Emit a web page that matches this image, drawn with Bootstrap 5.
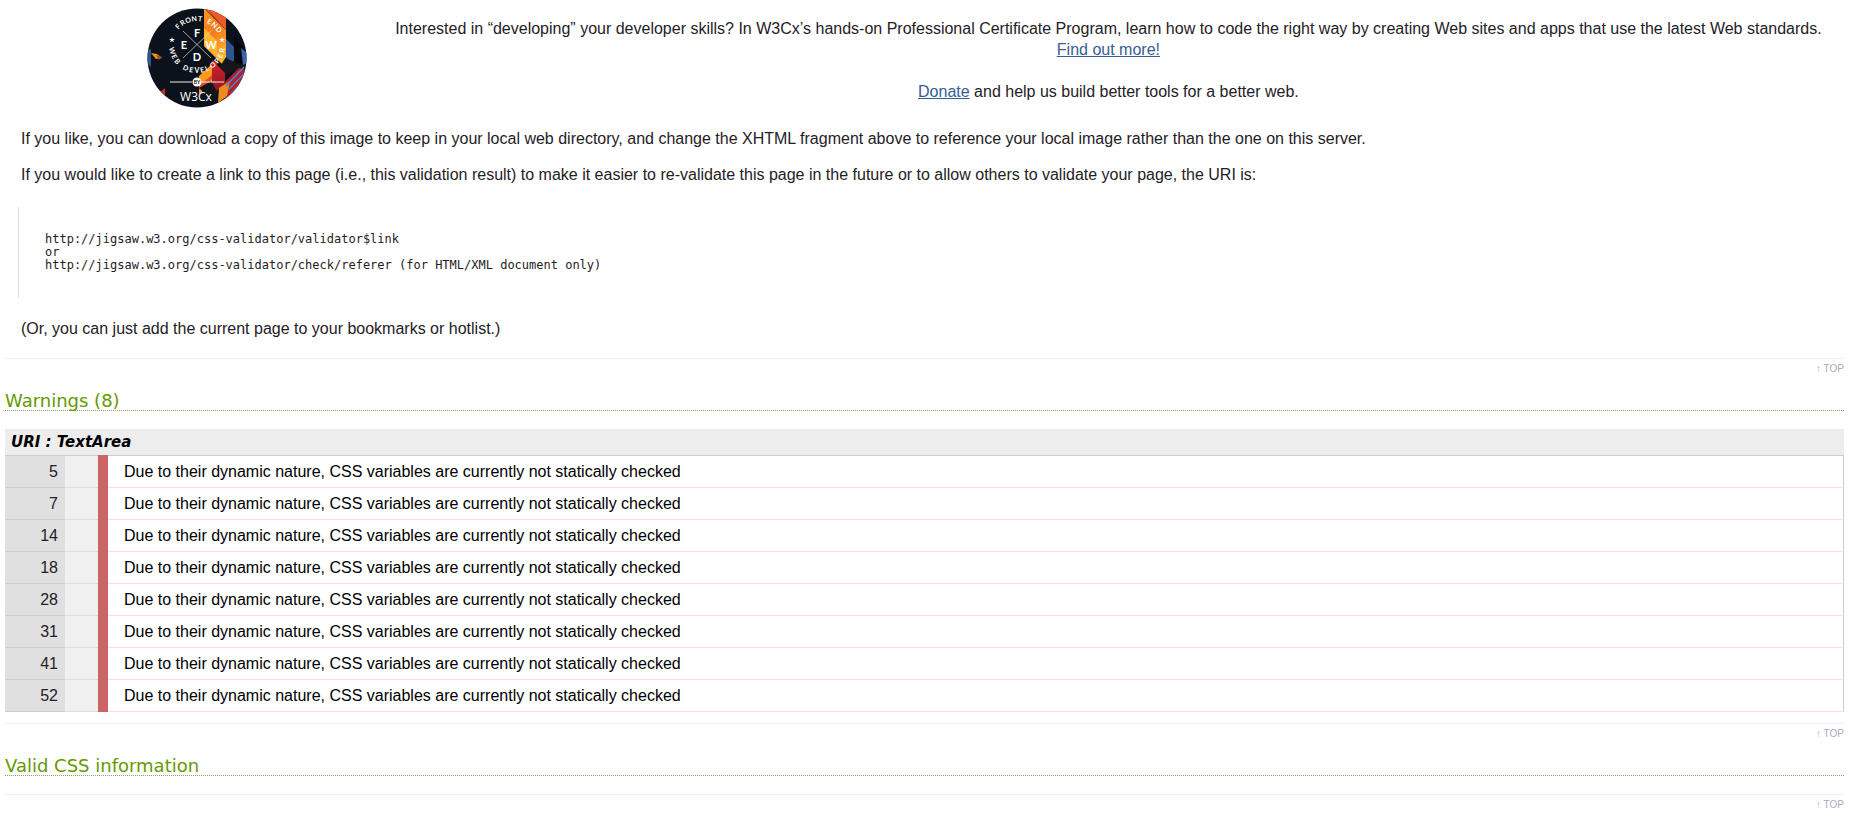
<!DOCTYPE html>
<html lang="en">
<head>
<meta charset="utf-8">
<meta name="viewport" content="width=device-width, initial-scale=1">
<title>W3C CSS Validator results for TextArea</title>
<link href="https://cdn.jsdelivr.net/npm/bootstrap@5.3.0/dist/css/bootstrap.min.css" rel="stylesheet">
<style>
body { font: 16px/21px "Liberation Sans", Arial, sans-serif; color: #1f2126; background: #fff; padding: 0 32px 0 5px; }
a { color: #365d95; }
.promo { padding: 8px 0 20px; }
.promo-logo { width: 20%; padding-left: 16px; }
.promo-copy { padding: 10px 16px 0; }
.note { margin: 0 16px 15px; }
.snippet { margin: 22px 13px 20px; padding: 26px; border-left: 1px solid #ddd; font: 12px/13px "DejaVu Sans Mono", Consolas, monospace; overflow: visible; }
.to-top { border-top: 1px solid #eef; font-size: 10px; line-height: 20px; }
.to-top a { color: #aab; text-decoration: none; }
.info .to-top { margin-top: 19px; }
.section-title { font: 18px/19px "DejaVu Sans", Verdana, sans-serif; color: #690; border-bottom: 1px dotted #996; margin: 12px 0 18px; }
.uri { font: italic bold 15px/26px "DejaVu Sans", Verdana, sans-serif; color: #000; background: #ededed; padding-left: 6px; }
.results { border-right: 1px solid #ccc; border-top: 1px solid #ccc; color: #000; margin-bottom: 11px; }
.results td { height: 32px; padding: 0; vertical-align: middle; }
.results .linenumber { width: 60px; background: #e0e0e0; color: #1f2126; text-align: right; padding-right: 7px; border-bottom: 1px solid #ccc; }
.results .codecontext { width: 38px; background: #f0f0f0; border-right: 10px solid #c66; border-bottom: 1px solid #ddd; }
.results .message { padding-left: 16px; border-bottom: 1px solid #fdd; }
</style>
</head>
<body>
<main>
  <section class="promo d-flex">
    <div class="promo-logo flex-shrink-0 text-center">
      <svg width="100" height="100" viewBox="0 0 100 100" role="img" aria-label="Front End Web Developer by W3Cx">
        <defs>
          <clipPath id="disc"><circle cx="50" cy="50" r="49.500"/></clipPath>
          <linearGradient id="flame" x1="0" y1="0" x2="0.300" y2="1"><stop offset="0" stop-color="#ff9420"/><stop offset=".5" stop-color="#f47b20"/><stop offset="1" stop-color="#ffb52b"/></linearGradient>
          <linearGradient id="crimson" x1="0" y1="0" x2="0" y2="1"><stop offset="0" stop-color="#d5222b"/><stop offset="1" stop-color="#8e1524"/></linearGradient>
        </defs>
        <g clip-path="url(#disc)">
          <rect width="100" height="100" fill="#0b121b"/>
          <path d="M57 0L79 22V60L70 51L57 38Z" fill="url(#flame)"/>
          <path d="M57 20L70 33V50L57 38Z" fill="#ffb42d"/>
          <path d="M57 0L66 8L79 22V0Z" fill="#ed5a30"/>
          <path d="M79 31L87 39V58H79Z" fill="#2e5496"/>
          <path d="M87 28L96 39V64L87 56Z" fill="#05090e"/>
          <path d="M94 40L100 45V55L96 57Z" fill="#3a65a9"/>
          <path d="M80 51L96 57V70L78 57Z" fill="#16161b"/>
          <path d="M79 49L90 59L78 69L72 60Z" fill="#16161b"/>
          <path d="M65 52L78 65V77L65 86Z" fill="url(#crimson)"/>
          <path d="M52 68L65 56V76L52 86Z" fill="#fb991e"/>
          <path d="M52 78L65 67V71L52 82Z" fill="#e84b2b"/>
          <path d="M52 80L64 73L72 87L66 93Z" fill="#10141b"/>
          <path d="M77 75L92 60L100 62V76L83 93L72 87Z" fill="#b51f2d"/>
          <path d="M72 80L83 73L80 88L71 95Z" fill="#ee8c1e"/>
          <path d="M79 78L97 59M81 82L99 64M84 86L100 69" stroke="#4783c9" stroke-width="1.500"/>
          <path d="M0 42L4 41V59L0 55Z" fill="#30568f"/>
          <path d="M4 45L10 46L15 50L9 51Z" fill="#f5941d"/>
          <path d="M9 47L15 49L12 52Z" fill="#994f1c"/>
          <path d="M13 84L18 80V96L11 90Z" fill="#c92a2c"/>
        </g>
        <circle cx="67" cy="56" r="3" fill="#d5222b"/>
        <path d="M36 23L64 50M64 23L36 50" stroke="#dedede" stroke-width=".700"/>
        <g fill="#fff" font-family="Lato, sans-serif" font-weight="bold" text-anchor="middle">
          <g font-size="11">
            <text x="50" y="29">F</text><text x="37" y="41">E</text><text x="64" y="41">W</text><text x="50" y="53">D</text>
          </g>
          <g font-size="7">
            <text x="50" y="13" transform="rotate(-46 50 37)">F</text>
            <text x="50" y="13" transform="rotate(-33 50 37)">R</text>
            <text x="50" y="13" transform="rotate(-20 50 37)">O</text>
            <text x="50" y="13" transform="rotate(-6 50 37)">N</text>
            <text x="50" y="13" transform="rotate(7 50 37)">T</text>
            <text x="50" y="13" transform="rotate(28 50 37)">E</text>
            <text x="50" y="13" transform="rotate(41 50 37)">N</text>
            <text x="50" y="13" transform="rotate(55 50 37)">D</text>
            <text x="50" y="65" transform="rotate(77 50 37)">W</text>
            <text x="50" y="65" transform="rotate(63 50 37)">E</text>
            <text x="50" y="65" transform="rotate(50 50 37)">B</text>
            <text x="50" y="65" transform="rotate(26 50 37)">D</text>
            <text x="50" y="65" transform="rotate(13 50 37)">E</text>
            <text x="50" y="65">V</text>
            <text x="50" y="65" transform="rotate(-12 50 37)">E</text>
            <text x="50" y="65" transform="rotate(-23 50 37)">L</text>
            <text x="50" y="65" transform="rotate(-38 50 37)">O</text>
            <text x="50" y="65" transform="rotate(-52 50 37)">P</text>
            <text x="50" y="65" transform="rotate(-65 50 37)">E</text>
            <text x="50" y="65" transform="rotate(-78 50 37)">R</text>
          </g>
        </g>
        <path id="star" d="M25 29L25.700 31H28L26.200 32.300L26.800 34.300L25 33L23.200 34.300L23.800 32.300L22 31H24.300Z" fill="#fff"/>
        <use href="#star" x="50"/>
        <path d="M23 74H45M55 74H77" stroke="#eee"/>
        <circle cx="50" cy="74" r="4.500" fill="#fff"/>
        <text x="50" y="76" font-family="Lato, sans-serif" font-weight="bold" font-size="5" text-anchor="middle" fill="#111">BY</text>
        <text x="49" y="93" font-family="'Liberation Sans Narrow', 'Open Sans', sans-serif" font-size="12" text-anchor="middle" fill="#fff">W3Cx</text>
      </svg>
    </div>
    <div class="promo-copy flex-grow-1 text-center">
      <p class="mb-0">Interested in “developing” your developer skills? In W3Cx’s hands-on Professional Certificate Program, learn how to code the right way by creating Web sites and apps that use the latest Web standards. <a href="#" class="d-inline-block">Find out more!</a></p>
      <br>
      <p class="mb-0"><a href="#">Donate</a> and help us build better tools for a better web.</p>
    </div>
  </section>

  <section class="info">
    <p class="note">If you like, you can download a copy of this image to keep in your local web directory, and change the XHTML fragment above to reference your local image rather than the one on this server.</p>
    <p class="note">If you would like to create a link to this page (i.e., this validation result) to make it easier to re-validate this page in the future or to allow others to validate your page, the URI is:</p>
    <pre class="snippet">http://jigsaw.w3.org/css-validator/validator$link
or
http://jigsaw.w3.org/css-validator/check/referer (for HTML/XML document only)</pre>
    <p class="note">(Or, you can just add the current page to your bookmarks or hotlist.)</p>
    <div class="to-top text-end"><a href="#">↑ TOP</a></div>
  </section>

  <section>
    <h3 class="section-title">Warnings (8)</h3>
    <h4 class="uri mb-0">URI : TextArea</h4>
    <table class="results w-100">
      <tbody>
        <tr><td class="linenumber">5</td><td class="codecontext"></td><td class="message">Due to their dynamic nature, CSS variables are currently not statically checked</td></tr>
        <tr><td class="linenumber">7</td><td class="codecontext"></td><td class="message">Due to their dynamic nature, CSS variables are currently not statically checked</td></tr>
        <tr><td class="linenumber">14</td><td class="codecontext"></td><td class="message">Due to their dynamic nature, CSS variables are currently not statically checked</td></tr>
        <tr><td class="linenumber">18</td><td class="codecontext"></td><td class="message">Due to their dynamic nature, CSS variables are currently not statically checked</td></tr>
        <tr><td class="linenumber">28</td><td class="codecontext"></td><td class="message">Due to their dynamic nature, CSS variables are currently not statically checked</td></tr>
        <tr><td class="linenumber">31</td><td class="codecontext"></td><td class="message">Due to their dynamic nature, CSS variables are currently not statically checked</td></tr>
        <tr><td class="linenumber">41</td><td class="codecontext"></td><td class="message">Due to their dynamic nature, CSS variables are currently not statically checked</td></tr>
        <tr><td class="linenumber">52</td><td class="codecontext"></td><td class="message">Due to their dynamic nature, CSS variables are currently not statically checked</td></tr>
      </tbody>
    </table>
    <div class="to-top text-end"><a href="#">↑ TOP</a></div>
  </section>

  <section>
    <h3 class="section-title">Valid CSS information</h3>
    <div class="to-top text-end"><a href="#">↑ TOP</a></div>
  </section>
</main>
<script src="https://cdn.jsdelivr.net/npm/bootstrap@5.3.0/dist/js/bootstrap.bundle.min.js"></script>
</body>
</html>
